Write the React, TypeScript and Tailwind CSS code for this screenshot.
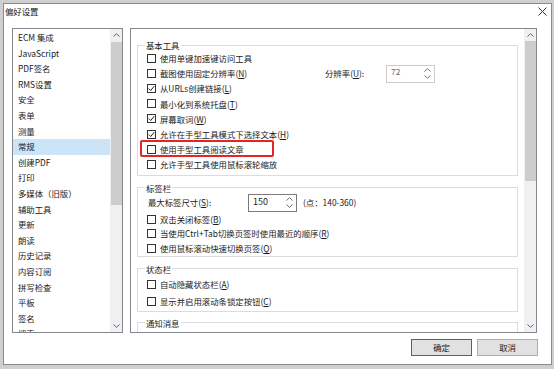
import React from "react";

const FONT = '"Noto Sans CJK SC", "Noto Sans", sans-serif';

function Check({ checked }: { checked?: boolean }) {
  return (
    <span className="w-[9px] h-[9px] border border-[#333333] bg-white shrink-0 flex items-center justify-center">
      {checked && (
        <svg width="7" height="7" viewBox="0 0 7 7">
          <path d="M0.7 3.5 L2.7 5.5 L6.3 1.1" stroke="#222" strokeWidth="1" fill="none" />
        </svg>
      )}
    </span>
  );
}

function Chevron({ up, color = "#606060" }: { up?: boolean; color?: string }) {
  return (
    <svg width="7" height="4" viewBox="0 0 7 4">
      <path d={up ? "M0.5 3.5 L3.5 0.7 L6.5 3.5" : "M0.5 0.5 L3.5 3.3 L6.5 0.5"} stroke={color} strokeWidth="1" fill="none" />
    </svg>
  );
}

function Scrollbar({ thumbTop, thumbH }: { thumbTop: number; thumbH: number }) {
  return (
    <div className="w-[12px] shrink-0 bg-[#f0f0f0] flex flex-col">
      <div className="h-[12px] flex items-center justify-center">
        <Chevron up />
      </div>
      <div className="flex-1 relative">
        <div className="absolute left-[1px] right-0 bg-[#cdcdcd]" style={{ top: thumbTop, height: thumbH }} />
      </div>
      <div className="h-[12px] flex items-center justify-center">
        <Chevron />
      </div>
    </div>
  );
}

function Spin() {
  return (
    <div className="flex flex-col items-center justify-center gap-[3px] w-[9px] mr-[2px]">
      <Chevron up color="#707070" />
      <Chevron color="#707070" />
    </div>
  );
}

function Acc({ k }: { k: string }) {
  return (
    <span>
      (<u>{k}</u>)
    </span>
  );
}

const listItems = [
  "ECM 集成",
  "JavaScript",
  "PDF签名",
  "RMS设置",
  "安全",
  "表单",
  "测量",
  "常规",
  "创建PDF",
  "打印",
  "多媒体（旧版）",
  "辅助工具",
  "更新",
  "朗读",
  "历史记录",
  "内容订阅",
  "拼写检查",
  "平板",
  "签名",
  "搜索",
];

function Row({ checked, children, h = "h-[15.1px]" }: { checked?: boolean; children: React.ReactNode; h?: string }) {
  return (
    <div className={`flex items-center gap-[4px] ${h}`}>
      <Check checked={checked} />
      <span className="whitespace-nowrap">{children}</span>
    </div>
  );
}

export default function App() {
  return (
    <div
      className="w-[554px] h-[369px] bg-[#cfcfcf] overflow-hidden text-[8.4px] text-[#1a1a1a]"
      style={{ fontFamily: FONT }}
    >
      <div className="ml-[3px] mt-[3px] w-[549px] h-[362px] bg-white border border-[#8a8a8a] flex flex-col">
        {/* title bar */}
        <div className="h-[24px] flex items-start justify-between shrink-0">
          <span className="pl-[1px] pt-[1px] leading-[12px]">偏好设置</span>
          <svg width="9" height="9" viewBox="0 0 9 9" className="mt-[3px] mr-[4px]">
            <path d="M0.5 0.5 L8.5 8.5 M8.5 0.5 L0.5 8.5" stroke="#333" strokeWidth="1" />
          </svg>
        </div>

        {/* main area */}
        <div className="flex h-[305px] pl-[8px] gap-[7px] shrink-0">
          {/* left list */}
          <div className="w-[111px] border border-[#828790] flex overflow-hidden">
            <div className="flex-1 pt-[1px] overflow-hidden">
              {listItems.map((t) => (
                <div
                  key={t}
                  className={`h-[15.6px] leading-[15.6px] pl-[5px] whitespace-nowrap ${t === "常规" ? "bg-[#cce4f7]" : ""}`}
                >
                  {t}
                </div>
              ))}
            </div>
            <Scrollbar thumbTop={1} thumbH={163} />
          </div>

          {/* right panel */}
          <div className="w-[407px] border border-[#828790] flex overflow-hidden">
            <div className="flex-1 pt-[10px] overflow-hidden">
              {/* 基本工具 */}
              <fieldset className="border border-[#dcdcdc] mx-[6px] pl-[9px] pb-[3px]">
                <legend className="ml-[-2px] px-[1px] leading-[12px]">基本工具</legend>
                <Row>使用单键加速键访问工具</Row>
                <div className="flex items-center h-[15.1px]">
                  <div className="w-[178px] flex items-center gap-[4px]">
                    <Check />
                    <span className="whitespace-nowrap">
                      截图使用固定分辨率<Acc k="N" />
                    </span>
                  </div>
                  <span className="w-[61px] whitespace-nowrap">
                    分辨率<Acc k="U" />:
                  </span>
                  <div className="w-[49px] h-[18px] border border-[#cccccc] flex items-center justify-between bg-white">
                    <span className="pl-[4px] text-[#6d6d6d] -mt-[4px]">72</span>
                    <Spin />
                  </div>
                </div>
                <Row checked>
                  从URLs创建链接<Acc k="L" />
                </Row>
                <Row>
                  最小化到系统托盘<Acc k="T" />
                </Row>
                <Row checked>
                  屏幕取词<Acc k="W" />
                </Row>
                <Row checked>
                  允许在手型工具模式下选择文本<Acc k="H" />
                </Row>
                <div className="relative">
                  <Row>使用手型工具阅读文章</Row>
                  <span className="absolute left-[-7px] top-[-2px] w-[134px] h-[17px] border-2 border-[#e52525] rounded-[2px]" />
                </div>
                <Row>允许手型工具使用鼠标滚轮缩放</Row>
              </fieldset>

              {/* 标签栏 */}
              <fieldset className="border border-[#dcdcdc] mx-[6px] mt-[6px] pl-[10px]">
                <legend className="ml-[-3px] px-[1px] leading-[12px]">标签栏</legend>
                <div className="flex items-center h-[18px]">
                  <span className="w-[100px] whitespace-nowrap">
                    最大标签尺寸<Acc k="S" />:
                  </span>
                  <div className="w-[49px] h-[18px] border border-[#7a7a7a] flex items-center justify-between bg-white">
                    <span className="pl-[4px] text-[9px] -mt-[3px]">150</span>
                    <Spin />
                  </div>
                  <span className="ml-[6px] whitespace-nowrap">(点：140-360)</span>
                </div>
                <div className="-ml-[1px]">
                  <Row h="h-[14.7px]">
                    双击关闭标签<Acc k="B" />
                  </Row>
                  <Row h="h-[14.7px]">
                    当使用Ctrl+Tab切换页签时使用最近的顺序<Acc k="R" />
                  </Row>
                  <Row h="h-[14.7px]">
                    使用鼠标滚动快速切换页签<Acc k="Q" />
                  </Row>
                </div>
              </fieldset>

              {/* 状态栏 */}
              <fieldset className="border border-[#dcdcdc] mx-[6px] mt-[6px] pl-[9px] pb-[2px]">
                <legend className="ml-[-2px] px-[1px] leading-[12px]">状态栏</legend>
                <div className="mt-[2px]">
                  <Row h="h-[15px]">
                    自动隐藏状态栏<Acc k="A" />
                  </Row>
                </div>
                <div className="mt-[2px]">
                  <Row h="h-[15px]">
                    显示并启用滚动条锁定按钮<Acc k="C" />
                  </Row>
                </div>
              </fieldset>

              {/* 通知消息 */}
              <fieldset className="border border-[#dcdcdc] mx-[6px] mt-[5px] pl-[9px] h-[40px]">
                <legend className="ml-[-2px] px-[1px] leading-[12px]">通知消息</legend>
              </fieldset>
            </div>
            <Scrollbar thumbTop={0} thumbH={140} />
          </div>
        </div>

        {/* buttons */}
        <div className="flex justify-end gap-[5px] mt-[6px] pr-[13px]">
          <button className="w-[61px] h-[17px] border border-[#0078d7] bg-[#e1e1e1] flex items-center justify-center leading-none">
            确定
          </button>
          <button className="w-[61px] h-[17px] border border-[#adadad] bg-[#e1e1e1] flex items-center justify-center leading-none">
            取消
          </button>
        </div>
      </div>
    </div>
  );
}
